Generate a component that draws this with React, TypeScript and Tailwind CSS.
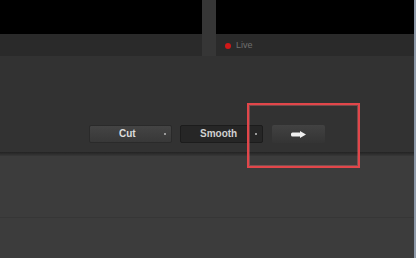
import React from "react";

export default function App() {
  return (
    <div className="relative flex w-[416px] h-[258px] overflow-hidden bg-[#333333]" style={{ fontFamily: '"Liberation Sans", Arial, sans-serif' }}>
      <div className="flex flex-col flex-1">
        {/* top monitors */}
        <div className="flex h-[56px] bg-[#343434]">
          <div className="flex flex-col w-[202px]">
            <div className="h-[34px] bg-black" />
            <div className="flex-1 bg-[#2a2a2a]" />
          </div>
          <div className="w-[14px] bg-[#363636]" />
          <div className="flex flex-col flex-1">
            <div className="h-[34px] bg-black" />
            <div className="flex-1 bg-[#2a2a2a] flex items-center pl-[9px] gap-[5px]">
              <div className="w-[6px] h-[6px] rounded-full bg-[#d01818] mt-[2px]" />
              <span className="text-[9px] text-[#6f6f6f] leading-none">Live</span>
            </div>
          </div>
        </div>
        {/* control strip */}
        <div className="h-[96px] bg-[#323232] pt-[69px] pl-[89px] flex items-start">
          <div className="relative w-[83px] h-[18px] rounded-[2px] border border-[#2a2a2a] bg-gradient-to-b from-[#444444] to-[#383838] flex items-center">
            <span className="ml-[29px] text-[10px] font-bold text-[#dcdcdc] leading-none">Cut</span>
            <span className="absolute right-[5px] top-[7px] w-[2px] h-[2px] bg-[#9a9a9a]" />
          </div>
          <div className="relative ml-[8px] w-[83px] h-[18px] rounded-[2px] border border-[#1c1c1c] bg-[#262626] flex items-center">
            <span className="ml-[19px] text-[10px] font-bold text-[#d0d0d0] leading-none">Smooth</span>
            <span className="absolute right-[5px] top-[7px] w-[2px] h-[2px] bg-[#9a9a9a]" />
          </div>
          <div className="ml-[9px] w-[53px] h-[18px] rounded-[2px] bg-gradient-to-b from-[#424242] to-[#343434] flex items-center justify-center">
            <svg width="15" height="7" viewBox="0 0 15 7">
              <rect x="0" y="1.5" width="10" height="4" rx="1.5" fill="#f0f0f0" />
              <polygon points="9,0 15,3.5 9,7" fill="#f0f0f0" />
            </svg>
          </div>
        </div>
        <div className="h-[4px] bg-gradient-to-b from-[#232323] to-[#383838]" />
        <div className="flex-1 bg-[#3c3c3c] flex flex-col">
          <div className="h-[61px]" />
          <div className="h-px bg-[#363636]" />
        </div>
      </div>
      <div className="w-[2px] bg-[#8e9aaa]" />
      {/* annotation */}
      <div className="absolute left-[247px] top-[103px] w-[113px] h-[65px] border-2 border-[#e2464a] shadow-[inset_0_0_0_1px_rgba(240,120,120,0.35)]" />
    </div>
  );
}
